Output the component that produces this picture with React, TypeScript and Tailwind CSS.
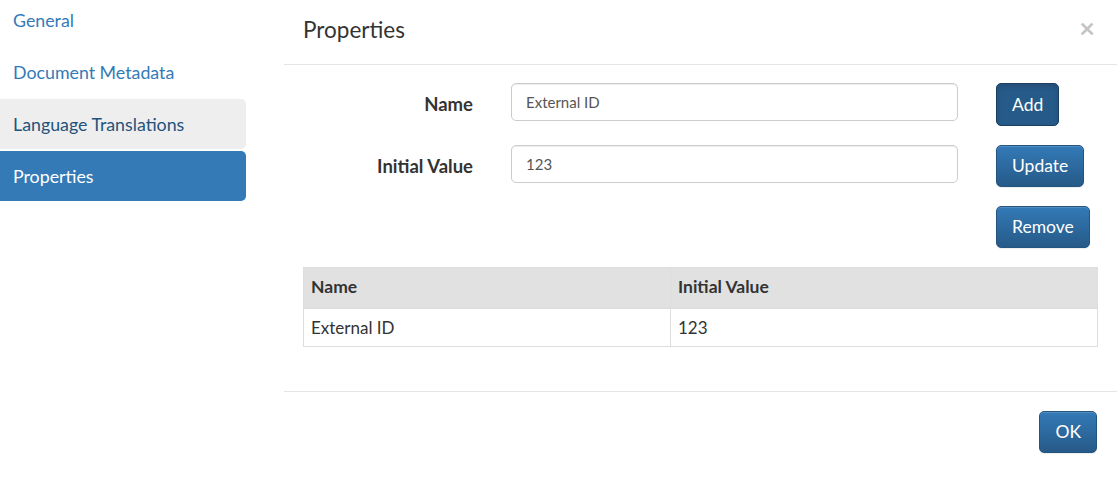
const btn =
  'rounded-[5px] border border-[#245580] bg-gradient-to-b from-[#337ab7] to-[#265a88] px-[15px] h-[42px] text-white text-[17.5px] leading-none shadow-[inset_0_1px_0_rgba(255,255,255,0.15),0_1px_1px_rgba(0,0,0,0.075)]';

const inputCls =
  'h-[38px] rounded-[5px] border border-[#cccccc] px-[14px] text-[15px] text-[#555] shadow-[inset_0_1px_1px_rgba(0,0,0,0.075)] outline-none';

export default function App() {
  return (
    <div className="flex w-[1117px] h-[478px] overflow-hidden bg-white text-[#333]" style={{ fontFamily: 'Lato, "Open Sans", sans-serif' }}>
      {/* Sidebar */}
      <nav className="w-[246px] shrink-0 mt-[-5px] flex flex-col gap-[2px] text-[17.8px]">
        <a className="h-[50px] flex items-center pl-[13px] text-[#337ab7]">General</a>
        <a className="h-[50px] flex items-center pl-[13px] text-[#337ab7]">Document Metadata</a>
        <a className="h-[50px] flex items-center pl-[13px] text-[#23527c] bg-[#eeeeee] rounded-r-[5px]">Language Translations</a>
        <a className="h-[50px] flex items-center pl-[13px] text-white bg-[#337ab7] rounded-r-[5px]">Properties</a>
      </nav>

      {/* Main panel */}
      <div className="ml-[38px] flex-1 flex flex-col">
        <div className="h-[65px] border-b border-[#e5e5e5] flex items-start justify-between pl-[19px] pr-[22px] pt-[14px]">
          <h4 className="text-[22.5px] leading-[32px]">Properties</h4>
          <span className="text-[27px] leading-none font-bold text-[#c4c4c4]">×</span>
        </div>

        <div className="px-[19px] pt-[18px]">
          <div className="grid grid-cols-[170px_447px_auto] gap-x-[38px] gap-y-[19px] items-start">
            <label className="text-right font-bold text-[18.5px] leading-[43px]">Name</label>
            <input readOnly value="External ID" className={inputCls} style={{ fontFamily: 'Lato, sans-serif' }} />
            <div>
              <button className="rounded-[5px] border border-[#1b3f5e] bg-[#265a88] px-[15px] h-[43px] text-white text-[17.5px] leading-none shadow-[inset_0_3px_5px_rgba(0,0,0,0.125)]">
                Add
              </button>
            </div>

            <label className="text-right font-bold text-[18.5px] leading-[42px]">Initial Value</label>
            <input readOnly value="123" className={inputCls} style={{ fontFamily: 'Lato, sans-serif' }} />
            <div>
              <button className={btn}>Update</button>
            </div>

            <div />
            <div />
            <div>
              <button className={btn}>Remove</button>
            </div>
          </div>

          <table className="mt-[19px] w-[795px] border-collapse border border-[#dddddd] text-[17px]">
            <thead>
              <tr className="bg-[#e1e1e1]">
                <th className="w-[367px] h-[40px] text-left font-bold text-[17.5px] px-[7px] border-r border-[#dddddd] border-b-2 border-b-[#dddddd]">Name</th>
                <th className="h-[40px] text-left font-bold text-[17.5px] px-[7px] border-b-2 border-b-[#dddddd]">Initial Value</th>
              </tr>
            </thead>
            <tbody>
              <tr>
                <td className="h-[39px] px-[7px] border-r border-[#dddddd]">External ID</td>
                <td className="h-[39px] px-[7px]">123</td>
              </tr>
            </tbody>
          </table>
        </div>

        <div className="mt-[44px] border-t border-[#e5e5e5] pt-[19px] pr-[20px] flex justify-end">
          <button className={btn + ' h-[42px] px-[14px]'}>OK</button>
        </div>
      </div>
    </div>
  );
}
